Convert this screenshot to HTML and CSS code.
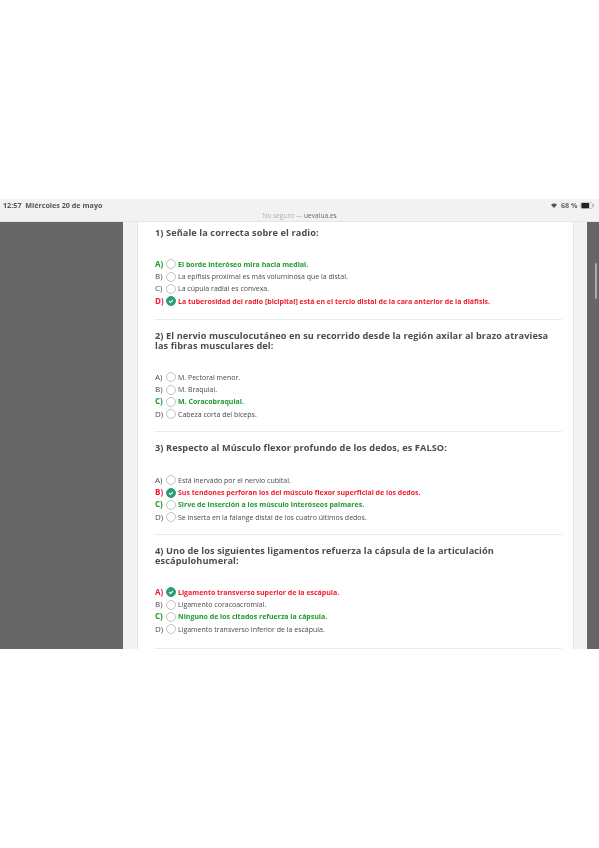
FILE: index.html
```html
<!DOCTYPE html>
<html lang="es">
<head>
<meta charset="utf-8">
<title>uevalua.es</title>
<link rel="stylesheet" href="styles.css">
</head>
<body>
<div class="shot">
  <header class="statusbar">
    <div class="status-top">
      <span class="clock">12:57&nbsp; Miércoles 20 de mayo</span>
      <span class="status-right">
        <svg class="wifi" viewBox="0 0 10 8"><path d="M0 2.6a7 7 0 0 1 10 0L5 8z" fill="#555"/></svg>
        <span>68 %</span>
        <svg class="battery" viewBox="0 0 16 8"><rect x=".4" y=".4" width="13.2" height="7.2" rx="1.8" fill="none" stroke="#aaa" stroke-width=".7"/><rect x="1" y="1" width="9" height="6" rx="1" fill="#222"/><rect x="14.3" y="2.6" width="1.2" height="2.8" rx=".5" fill="#aaa"/></svg>
      </span>
    </div>
    <div class="address"><span class="muted">No seguro —</span> uevalua.es</div>
  </header>
  <main class="view">
    <div class="side"></div>
    <div class="gutter"></div>
    <section class="sheet">
      <article class="question q1">
        <h2>1) Señale la correcta sobre el radio:</h2>
        <ul class="options">
          <li class="good"><b>A)</b><i class="radio"></i><span>El borde interóseo mira hacia medial.</span></li>
          <li><b>B)</b><i class="radio"></i><span>La epífisis proximal es más voluminosa que la distal.</span></li>
          <li><b>C)</b><i class="radio"></i><span>La cúpula radial es convexa.</span></li>
          <li class="bad"><b>D)</b><i class="radio on"><svg viewBox="0 0 10 10"><path d="M2.6 5.2l1.8 1.6L7.4 3.8" fill="none" stroke="#fff" stroke-width="1.3"/></svg></i><span>La tuberosidad del radio [bicipital] está en el tercio distal de la cara anterior de la diáfisis.</span></li>
        </ul>
      </article>
      <article class="question q2">
        <h2>2) El nervio musculocutáneo en su recorrido desde la región axilar al brazo atraviesa las fibras musculares del:</h2>
        <ul class="options">
          <li><b>A)</b><i class="radio"></i><span>M. Pectoral menor.</span></li>
          <li><b>B)</b><i class="radio"></i><span>M. Braquial.</span></li>
          <li class="good"><b>C)</b><i class="radio"></i><span>M. Coracobraquial.</span></li>
          <li><b>D)</b><i class="radio"></i><span>Cabeza corta del bíceps.</span></li>
        </ul>
      </article>
      <article class="question q3">
        <h2>3) Respecto al Músculo flexor profundo de los dedos, es FALSO:</h2>
        <ul class="options">
          <li><b>A)</b><i class="radio"></i><span>Está inervado por el nervio cubital.</span></li>
          <li class="bad"><b>B)</b><i class="radio on"><svg viewBox="0 0 10 10"><path d="M2.6 5.2l1.8 1.6L7.4 3.8" fill="none" stroke="#fff" stroke-width="1.3"/></svg></i><span>Sus tendones perforan los del músculo flexor superficial de los dedos.</span></li>
          <li class="good"><b>C)</b><i class="radio"></i><span>Sirve de inserción a los músculo interóseos palmares.</span></li>
          <li><b>D)</b><i class="radio"></i><span>Se inserta en la falange distal de los cuatro últimos dedos.</span></li>
        </ul>
      </article>
      <article class="question q4">
        <h2>4) Uno de los siguientes ligamentos refuerza la cápsula de la articulación escápulohumeral:</h2>
        <ul class="options">
          <li class="bad"><b>A)</b><i class="radio on"><svg viewBox="0 0 10 10"><path d="M2.6 5.2l1.8 1.6L7.4 3.8" fill="none" stroke="#fff" stroke-width="1.3"/></svg></i><span>Ligamento transverso superior de la escápula.</span></li>
          <li><b>B)</b><i class="radio"></i><span>Ligamento coracoacromial.</span></li>
          <li class="good"><b>C)</b><i class="radio"></i><span>Ninguno de los citados refuerza la cápsula.</span></li>
          <li><b>D)</b><i class="radio"></i><span>Ligamento transverso inferior de la escápula.</span></li>
        </ul>
      </article>
    </section>
    <div class="gutter right"></div>
    <div class="side narrow"><div class="thumb"></div></div>
  </main>
</div>
</body>
</html>
```
FILE: styles.css
```css
* { box-sizing: border-box; }
html, body { margin: 0; padding: 0; background: #fff; }
body { width: 599px; height: 848px; overflow: hidden; font-family: "Open Sans", "Liberation Sans", sans-serif; }
.shot { padding-top: 199px; filter: blur(0.5px); }

.statusbar { height: 23px; background: #f2f2f2; border-bottom: 1px solid #e6e6e6; position: relative; }
.status-top { display: flex; justify-content: space-between; align-items: center; height: 12px; padding: 0 4px 0 3px; font-size: 7.2px; font-weight: 700; color: #555; }
.status-right { display: flex; align-items: center; gap: 2.5px; color: #666; }
.wifi { width: 6px; height: 5px; margin-right: 1px; }
.battery { width: 15px; height: 7px; }
.address { text-align: center; font-size: 6.6px; line-height: 10px; color: #666; }
.muted { color: #b0b0b0; }

.view { display: flex; height: 427px; }
.side { width: 123px; background: #666; flex: none; }
.side.narrow { width: 12px; padding: 41px 0 0 8px; }
.thumb { width: 1.5px; height: 36px; background: #aaa; border-radius: 1px; }
.gutter { width: 15px; background: #f3f3f3; border-right: 1px solid #e4e4e4; flex: none; }
.gutter.right { width: 14px; border-right: 0; border-left: 1px solid #e4e4e4; }
.sheet { flex: 1; background: #fff; padding: 0 11px 0 17px; overflow: hidden; }

.question { border-bottom: 1px dotted #d8d8d8; }
.q1 { height: 98px; padding-top: 5px; }
.q2 { height: 112px; padding-top: 11px; }
.q3 { height: 103px; padding-top: 10px; }
.q4 { height: 114px; padding-top: 11px; }
h2 { margin: 0; font-size: 9.2px; line-height: 10px; font-weight: 700; color: #4c4c4c; letter-spacing: 0.09px; height: 40px; }
.q1 h2 { height: 31px; padding-top: 1px; }
.q3 h2 { height: 32px; padding-top: 1px; }

.options { list-style: none; margin: 0; padding: 0; }
.options li { display: flex; align-items: center; height: 12.4px; font-size: 7px; color: #4a4a4a; }
.options b { width: 11px; font-size: 8px; line-height: 10px; margin-top: -1px; font-weight: 400; flex: none; }
.radio { width: 10px; height: 10px; border: 0.8px solid #c2c2c2; border-radius: 50%; background: #fff; margin-left: -0.5px; margin-right: 2.5px; flex: none; display: block; }
.radio.on { background: #2e9e78; border-color: #2e9e78; }
.radio svg { display: block; width: 100%; height: 100%; }
.good, .bad { font-weight: 700; }
.good b, .bad b { font-weight: 700; }
.options li.good { color: #1f9a2e; }
.options li.bad { color: #ee1c2e; }
```
